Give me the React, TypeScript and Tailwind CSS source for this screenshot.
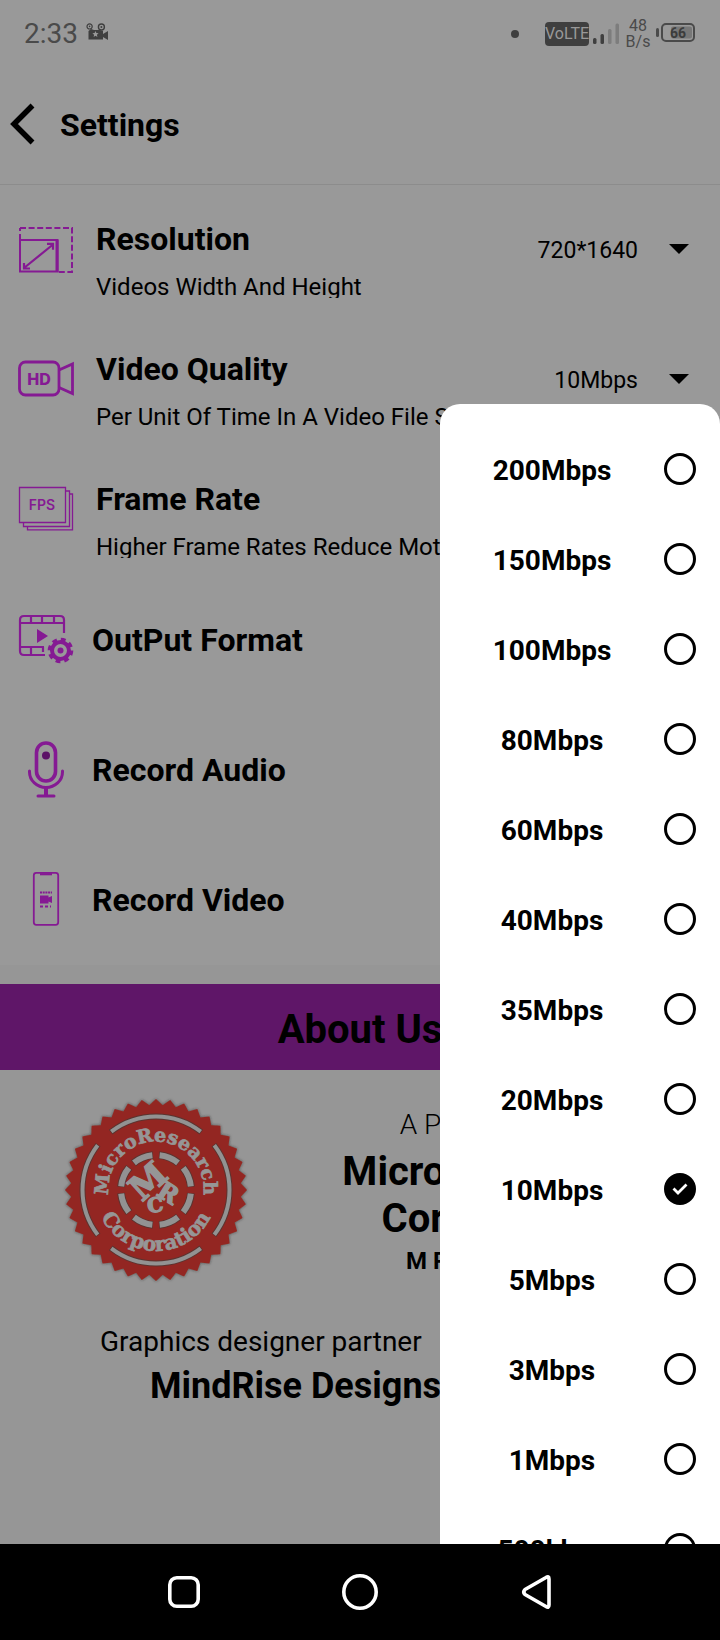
import { useState } from "react";

const BITRATES = [
  "200Mbps", "150Mbps", "100Mbps", "80Mbps", "60Mbps", "40Mbps", "35Mbps",
  "20Mbps", "10Mbps", "5Mbps", "3Mbps", "1Mbps", "500kbps",
];

const PURPLE = "#851a93";

function CameraIcon() {
  return (
    <svg width="24" height="18" viewBox="0 0 24 18" fill="none" aria-hidden="true">
      <circle cx="3.6" cy="3.4" r="2.6" stroke="#3f3f3f" strokeWidth="1.2" />
      <circle cx="3.6" cy="3.4" r="0.8" fill="#3f3f3f" />
      <circle cx="15.4" cy="4" r="3" stroke="#3f3f3f" strokeWidth="1.4" />
      <circle cx="15.4" cy="4" r="1" fill="#3f3f3f" />
      <path d="M2.5 8 5 6l3 1h6l3 1v3l5-3v9l-5-3v2.5H2.5z" fill="#3f3f3f" />
      <path d="m9.5 8 .9 2 2.200.2-1.7 1.500.5 2.200-1.900-1.100-1.900 1.100.5-2.200-1.700-1.500 2.200-.2z" fill="#999" />
    </svg>
  );
}

function SignalIcon() {
  return (
    <svg width="27" height="22" viewBox="0 0 27 22" aria-hidden="true">
      <rect x="0" y="15" width="3.500" height="6" rx="1.5" fill="#3f3f3f" />
      <rect x="7.500" y="11" width="3.500" height="10" rx="1.5" fill="#3f3f3f" />
      <rect x="15" y="6" width="3.500" height="15" rx="1.5" fill="#7d7d7d" />
      <rect x="22.500" y="0.500" width="3.500" height="20.500" rx="1.5" fill="#7d7d7d" />
    </svg>
  );
}

function BatteryIcon() {
  return (
    <svg width="40" height="22" viewBox="0 0 40 22" aria-label="Battery 66 percent">
      <rect x="0" y="5" width="3" height="9" rx="1.5" fill="#4a4a4a" />
      <rect x="6" y="1" width="32" height="17" rx="4" fill="none" stroke="#4a4a4a" strokeWidth="2" />
      <rect x="15" y="3.500" width="21" height="12" rx="2" fill="#777" />
      <text x="22" y="14.500" textAnchor="middle" fontSize="14" fontWeight="700" fill="#3c3c3c" fontFamily="Roboto, sans-serif">66</text>
    </svg>
  );
}

function ResolutionIcon() {
  return (
    <svg width="56" height="48" viewBox="0 0 56 48" fill="none" stroke={PURPLE} strokeWidth="2" aria-hidden="true">
      <path d="M2 2h52v44H40" strokeDasharray="6 2.600" />
      <path d="M2 5V2M2 14V8" />
      <path d="M2 14h37.500v31.500H2z" />
      <path d="M39 14v32" strokeWidth="3" />
      <path d="M6 42 35 18.500M29 17.800h6v6M6 37v5.500h6" strokeWidth="2.200" />
    </svg>
  );
}

function QualityIcon() {
  return (
    <svg width="56" height="42" viewBox="0 0 56 42" fill="none" stroke={PURPLE} strokeWidth="2.800" aria-hidden="true">
      <rect x="1.500" y="3" width="39.500" height="33" rx="6" />
      <path d="m41 11 13.500-6v29.500L41 28.500" />
      <text x="21" y="25.500" textAnchor="middle" fontSize="16" fontWeight="800" fill={PURPLE} stroke="none" fontFamily="Inter, sans-serif">HD</text>
    </svg>
  );
}

function FpsIcon() {
  return (
    <svg width="56" height="48" viewBox="0 0 56 48" fill="none" stroke={PURPLE} strokeWidth="1.300" aria-hidden="true">
      <path d="M1.500 1.500h46v35h-46z" />
      <path d="M5.500 36.500v4h46V5h-4M9.500 40.500v3.300h45V8h-3" />
      <text x="24" y="24" textAnchor="middle" fontSize="14" fontWeight="600" fill={PURPLE} stroke="none" fontFamily="Inter, sans-serif">FPS</text>
    </svg>
  );
}

function FormatIcon() {
  return (
    <svg width="56" height="50" viewBox="0 0 56 50" fill="none" stroke={PURPLE} strokeWidth="2.200" aria-hidden="true">
      <path d="M46 19V6q0-4-4-4H6Q2 2 2 6v31q0 4 4 4h21M2 9h44M2 33h24M13 2v7M24 2v7M36 2v7M13 33v8M25 33v5" />
      <path d="m19 15 11 7-11 7z" fill={PURPLE} stroke="none" />
      <circle cx="42.500" cy="36.500" r="8.500" strokeWidth="4" />
      <circle cx="42.500" cy="36.500" r="11.200" strokeWidth="3.200" strokeDasharray="4.8 3.996" />
      <circle cx="42.500" cy="36.500" r="3" fill={PURPLE} stroke="none" />
    </svg>
  );
}

function MicIcon() {
  return (
    <svg width="38" height="58" viewBox="0 0 38 58" fill="none" stroke={PURPLE} strokeWidth="3" strokeLinecap="round" aria-hidden="true">
      <rect x="9.500" y="3" width="19" height="38" rx="9.500" strokeWidth="3.600" />
      <path d="M2.500 31v1a16.500 15.500 0 0 0 33 0v-1" />
      <path d="M19 47v8" strokeWidth="4" strokeLinecap="butt" />
      <path d="M11 56h16" />
      <circle cx="19" cy="15.500" r="4" fill="#5c1367" stroke="none" />
    </svg>
  );
}

function PhoneIcon() {
  return (
    <svg width="28" height="56" viewBox="0 0 28 56" fill="none" stroke={PURPLE} strokeWidth="1.800" aria-hidden="true">
      <rect x="1.800" y="1.800" width="24.400" height="52" rx="2.500" />
      <path d="M8 3.200h12" strokeWidth="2.200" />
      <path d="M8 21.500h12" strokeWidth="2" strokeDasharray="2 0.700" />
      <path d="M8 24.500h8.500v2l3.500-1.500v7l-3.500-1.500v2H8z" fill={PURPLE} stroke="none" />
      <path d="M8 35.500h11" strokeWidth="2" strokeDasharray="3 2" />
    </svg>
  );
}

const SEAL_TEETH = Array.from({ length: 80 }, (_, i) => {
  const radius = i % 2 === 0 ? 91 : 85;
  const angle = (i * Math.PI) / 40 - Math.PI / 2;
  return `${(100 + radius * Math.cos(angle)).toFixed(2)},${(100 + radius * Math.sin(angle)).toFixed(2)}`;
}).join(" ");

function arc(radius: number, from: number, to: number) {
  const point = (deg: number) => {
    const a = (deg * Math.PI) / 180;
    return `${(100 + radius * Math.cos(a)).toFixed(2)} ${(100 + radius * Math.sin(a)).toFixed(2)}`;
  };
  return `M${point(from)}A${radius} ${radius} 0 0 1 ${point(to)}`;
}

function Seal() {
  return (
    <svg width="200" height="200" viewBox="0 0 200 200" role="img" aria-label="MicroResearch Corporation seal">
      <defs>
        <path id="seal-top" d="M53 106A47.500 47.500 0 1 1 147 106" />
        <path id="seal-bottom" d="M39 100A61 61 0 0 0 161 100" />
        <filter id="seal-shadow" x="-10%" y="-10%" width="120%" height="120%">
          <feDropShadow dx="0" dy="0" stdDeviation="1.5" floodColor="#222" floodOpacity="0.7" />
        </filter>
      </defs>
      <polygon points={SEAL_TEETH} fill="#932820" filter="url(#seal-shadow)" />
      <g fill="none" strokeLinecap="butt">
        {[0, 90, 180, 270].map((a) => (
          <g key={a}>
            <path d={arc(73.5, a - 38, a + 38)} stroke="#5b3430" strokeWidth="6" />
            <path d={arc(73.5, a - 37.5, a + 37.5)} stroke="#929292" strokeWidth="4" />
          </g>
        ))}
        {[0, 45, 90, 135, 180, 225, 270, 315].map((a) => (
          <g key={a}>
            <path d={arc(35, a + 5, a + 40)} stroke="#5b3430" strokeWidth="8" />
            <path d={arc(35, a + 6, a + 39)} stroke="#929292" strokeWidth="6" />
          </g>
        ))}
      </g>
      <circle cx="100" cy="100" r="31" fill="#932820" />
      <g fill="#969696" stroke="#969696" strokeWidth="0.7" fontFamily="'DejaVu Serif', serif" fontWeight="700">
        <text fontSize="19">
          <textPath href="#seal-top" startOffset="50%" textAnchor="middle">MicroResearch</textPath>
        </text>
        <text fontSize="20">
          <textPath href="#seal-bottom" startOffset="50%" textAnchor="middle">Corporation</textPath>
        </text>
        <g strokeWidth="1.4">
          <text fontSize="34" textAnchor="middle" transform="translate(100 100) rotate(-42)">M</text>
          <text fontSize="24" textAnchor="middle" transform="translate(108 110) rotate(32)">R</text>
          <text fontSize="20" textAnchor="middle" transform="translate(100 122) rotate(-6)">C</text>
        </g>
      </g>
    </svg>
  );
}

function DetailRow({ icon, title, description, value }: {
  icon: React.ReactNode; title: string; description: string; value: string;
}) {
  return (
    <section className="flex h-[130px] whitespace-nowrap">
      <div className="flex w-24 shrink-0 items-center pl-[18px]">{icon}</div>
      <div className="min-w-0 flex-1 pt-[35px]">
        <h2 className="text-[32px] leading-[38px] font-bold">{title}</h2>
        <p className="mt-[15px] h-[25px] w-max overflow-hidden text-2xl leading-7">{description}</p>
      </div>
      <button type="button" aria-haspopup="listbox" className="-ml-40 flex shrink-0 items-center gap-[31px] pr-[31px] text-[23px]">
        <span className="pt-0.5">{value}</span>
        <svg width="20" height="12" viewBox="0 0 20 12" aria-hidden="true"><path d="M0 0h20L10 10z" /></svg>
      </button>
    </section>
  );
}

function SimpleRow({ icon, title }: { icon: React.ReactNode; title: string }) {
  return (
    <section className="flex h-[130px] items-center">
      <div className="flex w-[92px] shrink-0 justify-center pb-0.5">{icon}</div>
      <h2 className="text-[32px] leading-[38px] font-bold">{title}</h2>
    </section>
  );
}

export default function App() {
  const [bitrate, setBitrate] = useState("10Mbps");

  return (
    <div className="flex h-screen flex-col overflow-hidden bg-black font-[Roboto,sans-serif] text-black">
      <div className="relative flex-1 overflow-hidden bg-[#969696]">
        <div className="flex h-16 items-center justify-between bg-[#999] px-6 pt-1 text-[#4a4a4a]">
          <div className="flex items-center gap-2">
            <span className="text-[28px]">2:33</span>
            <span className="pb-1"><CameraIcon /></span>
          </div>
          <div className="flex items-center gap-1">
            <span className="mr-[22px] size-2 rounded-full bg-[#3f3f3f]" />
            <span className="flex h-6 w-11 items-center justify-center rounded bg-[#3f3f3f] text-base text-[#999]">VoLTE</span>
            <SignalIcon />
            <span className="w-7 text-center text-base leading-4">48<br />B/s</span>
            <BatteryIcon />
          </div>
        </div>

        <header className="flex h-[121px] items-center gap-[25px] border-b border-[#8c8c8c] bg-[#999] pl-[10px]">
          <button type="button" aria-label="Back">
            <svg width="25" height="42" viewBox="0 0 25 42" fill="none" stroke="#000" strokeWidth="5.500" aria-hidden="true">
              <path d="M22.500 2.500 4 21l18.500 18.500" />
            </svg>
          </button>
          <h1 className="pt-0.5 text-[32px] font-bold">Settings</h1>
        </header>

        <main>
          <div className="bg-[#999]">
            <DetailRow icon={<ResolutionIcon />} title="Resolution" description="Videos Width And Height" value="720*1640" />
            <DetailRow icon={<QualityIcon />} title="Video Quality" description="Per Unit Of Time In A Video File Size" value={bitrate} />
            <DetailRow icon={<FpsIcon />} title="Frame Rate" description="Higher Frame Rates Reduce Motion Blur" value="60FPS" />
            <SimpleRow icon={<FormatIcon />} title="OutPut Format" />
            <SimpleRow icon={<MicIcon />} title="Record Audio" />
            <SimpleRow icon={<PhoneIcon />} title="Record Video" />
          </div>

          <h2 className="mt-[19px] flex h-[86px] items-center justify-center bg-[#5f1668] pt-1.5 text-[40px] font-bold">About Us</h2>

          <section className="flex pt-5 pl-14">
            <Seal />
            <div className="flex flex-1 flex-col items-center pt-[17px] text-center whitespace-nowrap">
              <p className="pl-4 text-[28px] leading-9 font-light">A Product From</p>
              <p className="pt-[5px] text-[40px] leading-[47px] font-bold">Micro Research&nbsp;<br />Corporation</p>
              <p className="pl-2 text-2xl leading-[38px] font-bold">M R C Company</p>
            </div>
          </section>

          <section className="px-[100px] pt-[34px]">
            <p className="text-[28px] leading-9">Graphics designer partner</p>
            <p className="pl-[50px] text-4xl leading-[52px] font-bold">MindRise Designs</p>
          </section>
        </main>

        <fieldset className="absolute top-[404px] right-0 bottom-0 w-[280px] overflow-hidden rounded-t-[20px] bg-white pt-5">
          <legend className="sr-only">Video quality</legend>
          {BITRATES.map((rate) => (
            <label key={rate} className="flex h-[90px] items-center pr-6 text-[28px] font-bold">
              <span className="flex-1 pt-[3px] text-center">{rate}</span>
              <span className="grid size-8 place-items-center">
                <input
                  type="radio"
                  name="bitrate"
                  value={rate}
                  checked={bitrate === rate}
                  onChange={() => setBitrate(rate)}
                  className="col-start-1 row-start-1 size-8 appearance-none rounded-full border-[3px] border-black checked:bg-black"
                />
                {bitrate === rate && (
                  <svg className="pointer-events-none col-start-1 row-start-1" width="16" height="12" viewBox="0 0 16 12" fill="none" stroke="#fff" strokeWidth="2.800" aria-hidden="true">
                    <path d="m1.500 5.500 4.500 4.500 8.500-8.500" />
                  </svg>
                )}
              </span>
            </label>
          ))}
        </fieldset>
      </div>

      <nav className="flex h-24 shrink-0 items-center justify-center gap-[136px]" aria-label="System navigation">
        <button type="button" aria-label="Recent apps">
          <svg width="40" height="40" viewBox="0 0 40 40" fill="none" stroke="#fff" strokeWidth="3.600" aria-hidden="true">
            <rect x="5.800" y="5.800" width="28.400" height="28.400" rx="7" />
          </svg>
        </button>
        <button type="button" aria-label="Home">
          <svg width="40" height="40" viewBox="0 0 40 40" fill="none" stroke="#fff" strokeWidth="3.600" aria-hidden="true">
            <circle cx="20" cy="20" r="16.200" />
          </svg>
        </button>
        <button type="button" aria-label="Back">
          <svg width="40" height="40" viewBox="0 0 40 40" fill="none" stroke="#fff" strokeWidth="3.600" strokeLinejoin="round" aria-hidden="true">
            <path d="M30 5.500Q33 3.500 33 7v26q0 3.500-3 1.500L9 22.500q-2.500-2.500 0-5z" />
          </svg>
        </button>
      </nav>
    </div>
  );
}
